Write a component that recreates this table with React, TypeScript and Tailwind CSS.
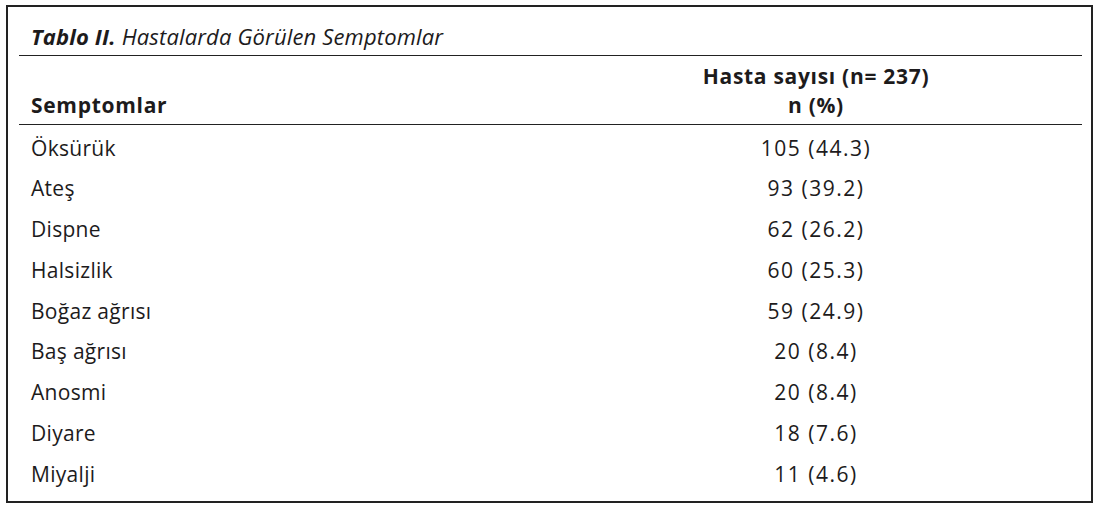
import React from "react";

const rows: [string, string][] = [
  ["Öksürük", "105 (44.3)"],
  ["Ateş", "93 (39.2)"],
  ["Dispne", "62 (26.2)"],
  ["Halsizlik", "60 (25.3)"],
  ["Boğaz ağrısı", "59 (24.9)"],
  ["Baş ağrısı", "20 (8.4)"],
  ["Anosmi", "20 (8.4)"],
  ["Diyare", "18 (7.6)"],
  ["Miyalji", "11 (4.6)"],
];

export default function App() {
  return (
    <div className="w-[1100px] h-[513px] bg-white pt-[5px] pl-[6px]">
      <div
        className="w-[1087px] h-[498px] border-2 border-[#222] pl-[11px] pr-[9px] text-[#1d1b1c]"
        style={{ fontFamily: '"Open Sans", "Noto Sans", sans-serif' }}
      >
        <div className="h-[49px] border-b border-[#222] flex items-end pl-[12px] pb-[4px] text-[22px] italic tracking-[0.15px] leading-[30px]">
          <span className="font-bold">Tablo II.</span>
          <span className="ml-[6px]">Hastalarda Görülen Semptomlar</span>
        </div>
        <div className="h-[69px] border-b border-[#222] flex text-[21px] font-bold leading-[29px] tracking-[0.7px]">
          <div className="w-[531px] flex items-end pl-[12px] pb-[4px]">Semptomlar</div>
          <div className="flex-1 flex flex-col items-center justify-end pb-[4px]">
            <span>Hasta sayısı (n= 237)</span>
            <span>n (%)</span>
          </div>
        </div>
        <div className="pt-[3px] text-[21px]">
          {rows.map(([a, b]) => (
            <div key={a} className="h-[40.75px] flex items-center">
              <div className="w-[531px] pl-[12px] tracking-[0.3px]">{a}</div>
              <div className="flex-1 text-center tracking-[1.5px]">{b}</div>
            </div>
          ))}
        </div>
      </div>
    </div>
  );
}
